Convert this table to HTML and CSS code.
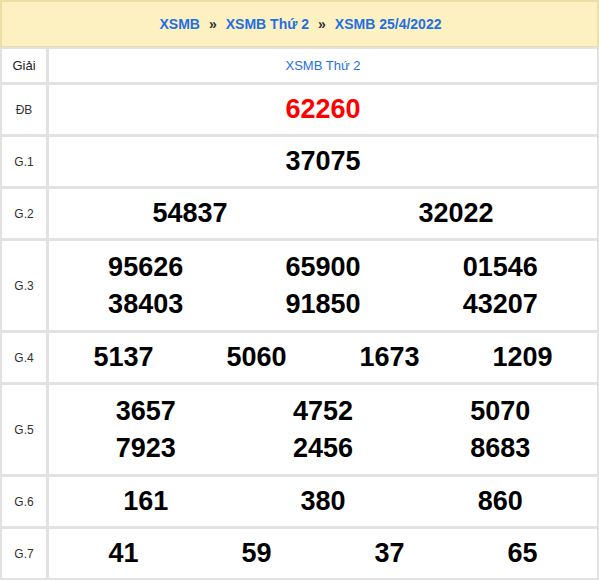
FILE: index.html
```html
<!DOCTYPE html>
<html lang="vi">
<head>
<meta charset="utf-8">
<title>XSMB 25/4/2022</title>
<link rel="stylesheet" href="styles.css">
</head>
<body>
<div class="page">
  <div class="crumbs">
    <a class="crumb">XSMB</a><span class="sep">»</span><a class="crumb">XSMB Thứ 2</a><span class="sep">»</span><a class="crumb">XSMB 25/4/2022</a>
  </div>
  <div class="board">
    <div class="label label-head">Giải</div>
    <div class="cell cell-head">XSMB Thứ 2</div>

    <div class="label">ĐB</div>
    <div class="cell"><div class="nums cols-1"><span class="num special">62260</span></div></div>

    <div class="label">G.1</div>
    <div class="cell"><div class="nums cols-1"><span class="num">37075</span></div></div>

    <div class="label">G.2</div>
    <div class="cell"><div class="nums cols-2"><span class="num">54837</span><span class="num">32022</span></div></div>

    <div class="label">G.3</div>
    <div class="cell"><div class="nums cols-3"><span class="num">95626</span><span class="num">65900</span><span class="num">01546</span><span class="num">38403</span><span class="num">91850</span><span class="num">43207</span></div></div>

    <div class="label">G.4</div>
    <div class="cell"><div class="nums cols-4"><span class="num">5137</span><span class="num">5060</span><span class="num">1673</span><span class="num">1209</span></div></div>

    <div class="label">G.5</div>
    <div class="cell"><div class="nums cols-3"><span class="num">3657</span><span class="num">4752</span><span class="num">5070</span><span class="num">7923</span><span class="num">2456</span><span class="num">8683</span></div></div>

    <div class="label">G.6</div>
    <div class="cell"><div class="nums cols-3"><span class="num">161</span><span class="num">380</span><span class="num">860</span></div></div>

    <div class="label">G.7</div>
    <div class="cell"><div class="nums cols-4"><span class="num">41</span><span class="num">59</span><span class="num">37</span><span class="num">65</span></div></div>
  </div>
</div>
</body>
</html>
```

FILE: styles.css
```css
* { box-sizing: border-box; }
html, body { margin: 0; padding: 0; background: #fff; }
body { font-family: "Liberation Sans", Arial, sans-serif; }
.page { width: 599px; }

.crumbs {
  height: 47px;
  background: #fdf1c2;
  border: 2px solid #ecdfa6;
  border-bottom: 1px solid #ecdfa6;
  display: flex;
  align-items: center;
  justify-content: center;
  font-size: 14px;
  font-weight: bold;
  padding-left: 2px;
}
.crumb { color: #1f6fe6; text-decoration: none; }
.sep { color: #333; margin: 0 9px; font-size: 14px; }

.board {
  display: grid;
  grid-template-columns: 44px 1fr;
  grid-template-rows: 33px 49px 49px 49px 89px 49px 89px 49px 49px;
  gap: 3px;
  padding: 2px;
  background: #e2e2e2;
}
.label {
  background: #fff;
  display: flex;
  align-items: center;
  justify-content: center;
  font-size: 12px;
  color: #333;
}
.label-head { font-size: 13px; color: #222; }
.cell {
  background: #fff;
  display: flex;
  align-items: center;
  padding: 0 8px;
}
.cell-head {
  justify-content: center;
  font-size: 13px;
  color: #1f6fe6;
}

.nums {
  flex: 1;
  display: grid;
  font-size: 27px;
  font-weight: bold;
  color: #000;
  line-height: 37px;
  text-align: center;
}
.cols-1 { grid-template-columns: 1fr; }
.cols-2 { grid-template-columns: 1fr 1fr; }
.cols-3 { grid-template-columns: 1fr 1fr 1fr; }
.cols-4 { grid-template-columns: 1fr 1fr 1fr 1fr; }
.num.special { color: #f00; }
```
